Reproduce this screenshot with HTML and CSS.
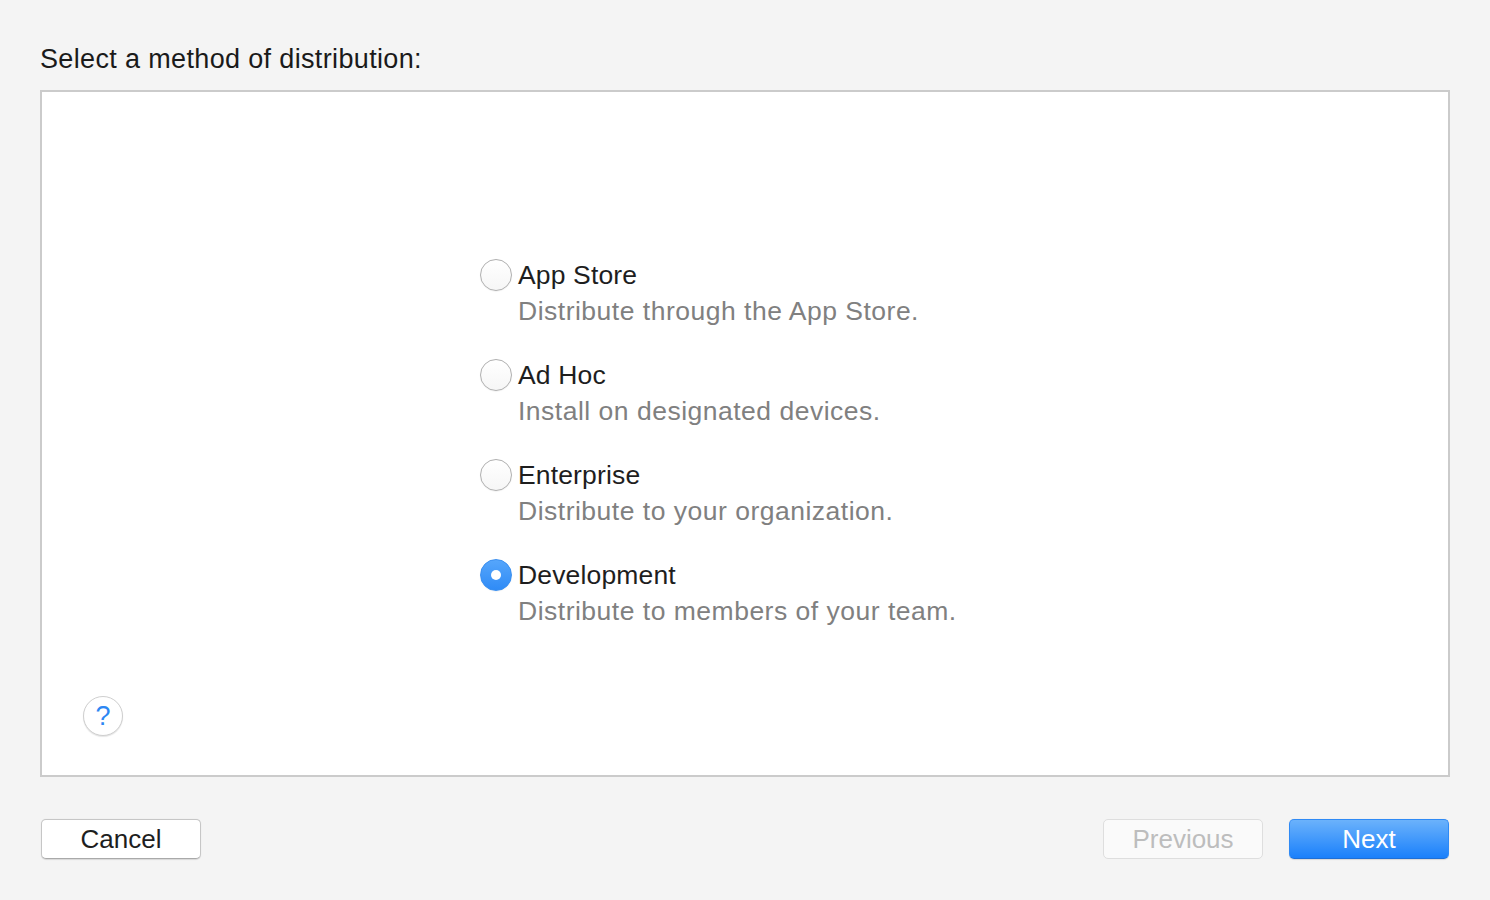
FILE: index.html
```html
<!DOCTYPE html>
<html>
<head>
<meta charset="utf-8">
<link rel="stylesheet" href="styles.css">
</head>
<body>
<div class="page">
  <div class="title">Select a method of distribution:</div>
  <div class="panel">
    <div class="options">
      <div class="option">
        <span class="radio"></span>
        <div class="texts">
          <div class="label">App Store</div>
          <div class="desc">Distribute through the App Store.</div>
        </div>
      </div>
      <div class="option">
        <span class="radio"></span>
        <div class="texts">
          <div class="label">Ad Hoc</div>
          <div class="desc">Install on designated devices.</div>
        </div>
      </div>
      <div class="option">
        <span class="radio"></span>
        <div class="texts">
          <div class="label">Enterprise</div>
          <div class="desc">Distribute to your organization.</div>
        </div>
      </div>
      <div class="option">
        <span class="radio checked"></span>
        <div class="texts">
          <div class="label">Development</div>
          <div class="desc">Distribute to members of your team.</div>
        </div>
      </div>
    </div>
    <div class="help">?</div>
  </div>
  <div class="footer">
    <button class="btn">Cancel</button>
    <div class="right">
      <button class="btn disabled">Previous</button>
      <button class="btn primary">Next</button>
    </div>
  </div>
</div>
</body>
</html>
```
FILE: styles.css
```css
html, body {
  margin: 0;
  padding: 0;
  background: #f4f4f4;
  font-family: "Liberation Sans", Arial, sans-serif;
  color: #1f1f1f;
}
.page {
  width: 1410px;
  padding: 0 40px;
  height: 900px;
  display: flex;
  flex-direction: column;
}
.title {
  font-size: 27px;
  letter-spacing: 0.35px;
  line-height: 36px;
  margin-top: 41px;
  height: 36px;
  color: #1a1a1a;
}
.panel {
  margin-top: 13px;
  height: 683px;
  border: 2px solid #cbcbcb;
  background: #ffffff;
  display: flex;
  flex-direction: column;
}
.options {
  padding-top: 165px;
  padding-left: 438px;
  display: flex;
  flex-direction: column;
  gap: 28px;
}
.option {
  display: flex;
  align-items: flex-start;
}
.radio {
  width: 30px;
  height: 30px;
  margin-top: 2px;
  border-radius: 50%;
  border: 1px solid #b0b0b0;
  background: linear-gradient(#ffffff, #f6f6f6);
  box-shadow: 0 0.5px 1px rgba(0,0,0,0.08);
  box-sizing: content-box;
  flex: none;
  margin-right: 6px;
  display: flex;
  align-items: center;
  justify-content: center;
}
.radio.checked {
  border-color: #3a8ff0;
  background: linear-gradient(#56a6fb, #2f8bf6);
}
.radio.checked::after {
  content: "";
  width: 10px;
  height: 10px;
  border-radius: 50%;
  background: #ffffff;
}
.label {
  font-size: 26.5px;
  letter-spacing: 0.15px;
  line-height: 36px;
  color: #1e1e1e;
}
.desc {
  font-size: 26.5px;
  letter-spacing: 0.5px;
  line-height: 36px;
  color: #808080;
}
.help {
  margin-top: auto;
  margin-left: 41px;
  margin-bottom: 39px;
  width: 38px;
  height: 38px;
  border-radius: 50%;
  border: 1px solid #cfcfcf;
  box-shadow: 0 1px 1px rgba(0,0,0,0.1);
  background: #ffffff;
  color: #2d87f3;
  font-size: 27px;
  line-height: 38px;
  text-align: center;
}
.footer {
  margin-top: 42px;
  padding: 0 1px 0 1px;
  display: flex;
  justify-content: space-between;
}
.right {
  display: flex;
  gap: 26px;
}
.btn {
  width: 160px;
  height: 40px;
  border-radius: 5px;
  border: 1px solid #c6c6c6;
  border-bottom-color: #a9a9a9;
  background: #ffffff;
  box-shadow: 0 0.5px 1px rgba(0,0,0,0.12);
  font-family: "Liberation Sans", Arial, sans-serif;
  font-size: 26px;
  color: #1e1e1e;
  padding: 0;
  margin: 0;
}
.btn.disabled {
  background: #fafafa;
  border-color: #dedede;
  color: #bdbdbd;
  box-shadow: none;
}
.btn.primary {
  background: linear-gradient(#6bb2fb, #1a80fb);
  border-color: #2f8af5;
  border-bottom-color: #1e6fd6;
  color: #ffffff;
}
```
